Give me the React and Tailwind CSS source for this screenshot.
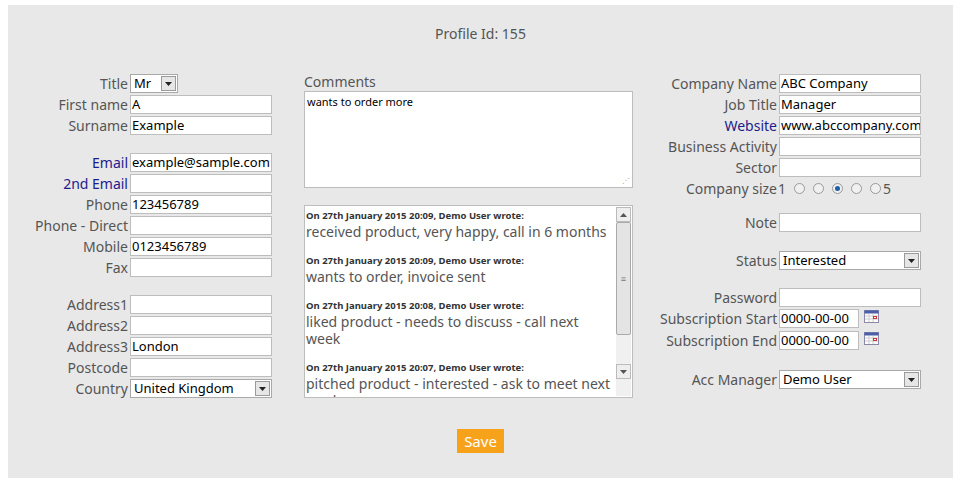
import React from 'react';

const Input = ({ value = '', w = 'w-[142px]' }) => (
    <div className={`${w} h-[19px] bg-white border border-[#bdbdbd] text-[13px] leading-[17px] px-[1px] text-black overflow-hidden whitespace-nowrap`}>{value}</div>
);

const Select = ({ value, w = 'w-[142px]' }) => (
    <div className={`${w} h-[19px] bg-white border border-[#a9a9a9] flex items-center text-[13px] text-black`}>
        <span className="flex-1 pl-[3px] leading-[17px]">{value}</span>
        <span className="w-[15px] h-[15px] mr-[1px] bg-[#e6e6e6] border border-[#9a9a9a] flex items-center justify-center">
            <svg width="7" height="4" viewBox="0 0 7 4"><path d="M0 0h7L3.5 4z" fill="#222" /></svg>
        </span>
    </div>
);

const Row = ({ label, lw, blue, children, h = 'h-[21px]' }) => (
    <div className={`flex ${h} items-start`}>
        <div className={`${lw} text-right pr-[2px] leading-[19px] whitespace-nowrap ${blue ? 'text-[#1c1c8c]' : 'text-[#555]'}`}>{label}</div>
        {children}
    </div>
);

const Cal = () => (
    <svg width="15" height="13" viewBox="0 0 15 13" className="ml-[5px] mt-[1px]">
        <rect x="0.5" y="0.5" width="14" height="12" fill="#fff" stroke="#8a8aa8" />
        <rect x="0.5" y="0.5" width="14" height="3" fill="#4b5ea8" />
        <path d="M1 6h13M1 9h13M5 4v8M9 4v8" stroke="#ccc" />
        <rect x="9.5" y="6.5" width="3" height="2" fill="none" stroke="#c33" />
    </svg>
);

const Radio = ({ on }) => (
    <span className="w-[11px] h-[11px] rounded-full border border-[#9a9a9a] bg-[#f0f0f0] flex items-center justify-center">
        {on && <span className="w-[5px] h-[5px] rounded-full bg-[#1f5fa8]" />}
    </span>
);

const notes = [
    ['20:09', 'received product, very happy, call in 6 months'],
    ['20:09', 'wants to order, invoice sent'],
    ['20:08', 'liked product - needs to discuss - call next week'],
    ['20:07', 'pitched product - interested - ask to meet next week'],
];

export default function App() {
    const L = 'w-[122px]';
    const R = 'w-[119px]';
    return (
        <div className="w-[960px] h-[488px] bg-white pt-[5px] pl-[8px] font-['Liberation_Sans'] text-[14px]">
            <div className="w-[945px] h-[473px] bg-[#e8e8e8] flex flex-col">
                <div className="text-center text-[#555] mt-[20px] h-[18px] leading-[18px]">Profile Id: 155</div>
                <div className="flex mt-[31px]">
                    {/* left */}
                    <div className="w-[264px]">
                        <Row label="Title" lw={L}><Select value="Mr" w="w-[48px]" /></Row>
                        <Row label="First name" lw={L}><Input value="A" /></Row>
                        <Row label="Surname" lw={L}><Input value="Example" /></Row>
                        <div className="h-[16px]" />
                        <Row label="Email" lw={L} blue><Input value="example@sample.com" /></Row>
                        <Row label="2nd Email" lw={L} blue><Input /></Row>
                        <Row label="Phone" lw={L}><Input value="123456789" /></Row>
                        <Row label="Phone - Direct" lw={L}><Input /></Row>
                        <Row label="Mobile" lw={L}><Input value="0123456789" /></Row>
                        <Row label="Fax" lw={L}><Input /></Row>
                        <div className="h-[16px]" />
                        <Row label="Address1" lw={L}><Input /></Row>
                        <Row label="Address2" lw={L}><Input /></Row>
                        <Row label="Address3" lw={L}><Input value="London" /></Row>
                        <Row label="Postcode" lw={L}><Input /></Row>
                        <Row label="Country" lw={L}><Select value="United Kingdom" /></Row>
                    </div>
                    {/* middle */}
                    <div className="w-[329px] ml-[32px] mt-[-1px]">
                        <div className="text-[#555] leading-[18px]">Comments</div>
                        <div className="h-[97px] bg-white border border-[#bdbdbd] font-['DejaVu_Sans_Mono'] text-[11px] text-black px-[2px] pt-[2px] relative">
                            wants to order more
                            <span className="absolute right-[2px] bottom-[1px] text-[8px] text-[#aaa]">⋰</span>
                        </div>
                        <div className="mt-[17px] h-[193px] bg-white border border-[#bdbdbd] flex overflow-hidden">
                            <div className="flex-1 pl-[1px] pt-[3px] overflow-hidden">
                                {notes.map(([t, txt], i) => (
                                    <div key={i} className="mb-[14px]">
                                        <div className="font-['DejaVu_Sans_Mono'] font-bold text-[9.5px] leading-[14px] text-[#333] whitespace-nowrap">On 27th January 2015 {t}, Demo User wrote:</div>
                                        <div className="text-[#555] leading-[17px]">{txt}</div>
                                    </div>
                                ))}
                            </div>
                            <div className="w-[15px] my-[1px] mr-[1px] flex flex-col bg-[#f0f0f0]">
                                <div className="h-[15px] border border-[#bbb] bg-[#eee] flex items-center justify-center"><svg width="7" height="4" viewBox="0 0 7 4"><path d="M0 4h7L3.5 0z" fill="#555" /></svg></div>
                                <div className="h-[113px] border border-[#aaa] bg-[#e4e4e4] rounded-[2px] flex items-center justify-center text-[9px] text-[#777]">≡</div>
                                <div className="flex-1" />
                                <div className="h-[15px] border border-[#bbb] bg-[#eee] flex items-center justify-center"><svg width="7" height="4" viewBox="0 0 7 4"><path d="M0 0h7L3.5 4z" fill="#555" /></svg></div>
                                <div className="h-[17px]" />
                            </div>
                        </div>
                    </div>
                    {/* right */}
                    <div className="ml-[27px] w-[264px]">
                        <Row label="Company Name" lw={R}><Input value="ABC Company" /></Row>
                        <Row label="Job Title" lw={R}><Input value="Manager" /></Row>
                        <Row label="Website" lw={R} blue><Input value="www.abccompany.com" /></Row>
                        <Row label="Business Activity" lw={R}><Input /></Row>
                        <Row label="Sector" lw={R}><Input /></Row>
                        <Row label="Company size" lw={R}>
                            <div className="flex items-center gap-[8px] h-[19px] text-[#555] ml-[-1px]">
                                <span>1</span>
                                <Radio /><Radio /><Radio on /><Radio />
                                <span className="flex items-center gap-[2px]"><Radio />5</span>
                            </div>
                        </Row>
                        <div className="h-[13px]" />
                        <Row label="Note" lw={R}><Input /></Row>
                        <div className="h-[17px]" />
                        <Row label="Status" lw={R}><Select value="Interested" /></Row>
                        <div className="h-[16px]" />
                        <Row label="Password" lw={R}><Input /></Row>
                        <Row label="Subscription Start" lw={R} h="h-[22px]"><Input value="0000-00-00" w="w-[80px]" /><Cal /></Row>
                        <Row label="Subscription End" lw={R}><Input value="0000-00-00" w="w-[80px]" /><Cal /></Row>
                        <div className="h-[18px]" />
                        <Row label="Acc Manager" lw={R}><Select value="Demo User" /></Row>
                    </div>
                </div>
                <div className="flex justify-center mt-[29px]">
                    <div className="bg-[#f7a21b] text-white px-[7px] h-[24px] leading-[24px] text-[15px]">Save</div>
                </div>
            </div>
        </div>
    );
}
